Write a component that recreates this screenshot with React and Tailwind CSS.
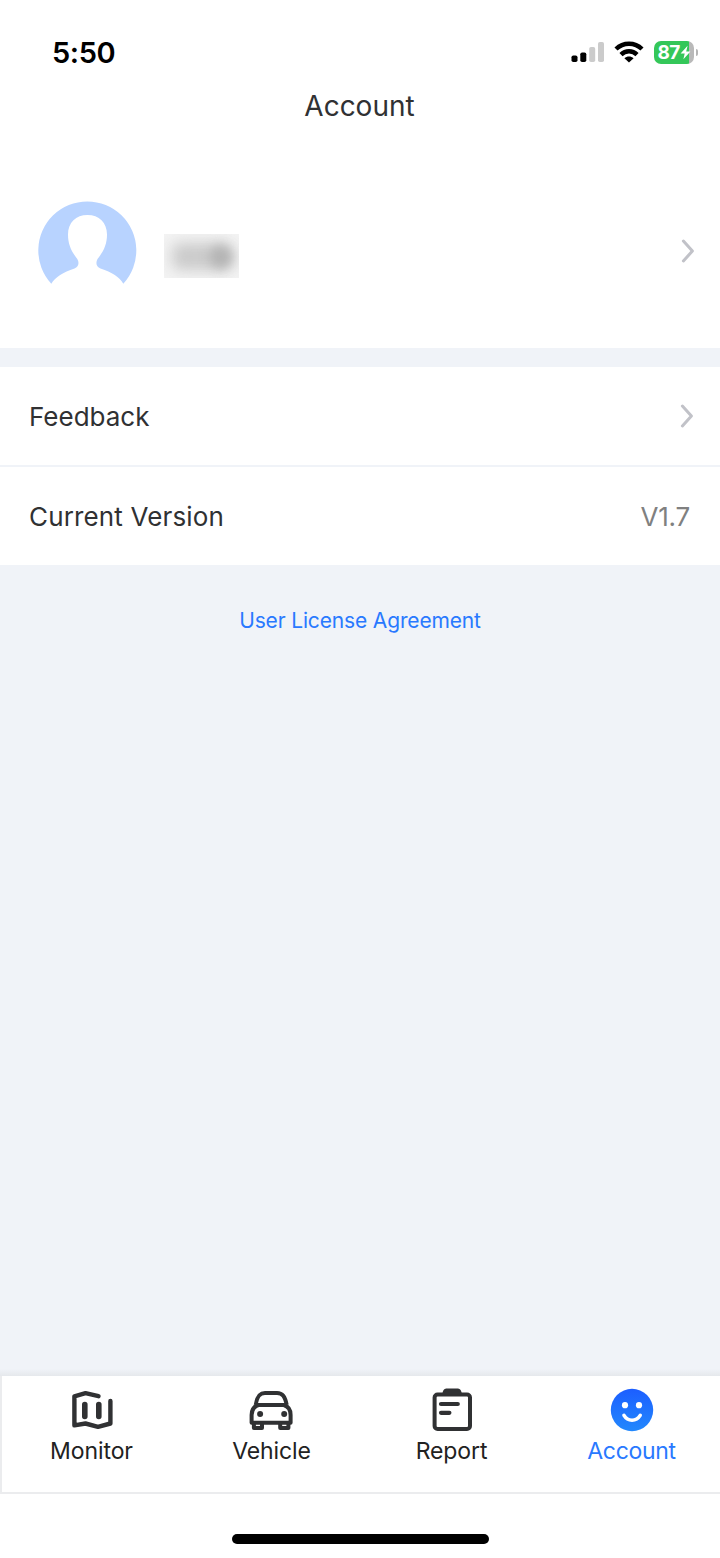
import { clsx } from 'clsx';

function SignalIcon() {
    return (
        <svg width="34" height="22" viewBox="0 0 34 22">
            <rect x="0.5" y="14.5" width="6" height="6.5" rx="1.8" fill="#000" />
            <rect x="9.3" y="11.5" width="6" height="9.5" rx="1.8" fill="#000" />
            <rect x="18.2" y="6" width="6" height="15" rx="1.8" fill="#cbcbcb" />
            <rect x="27" y="1" width="6" height="20" rx="1.8" fill="#cbcbcb" />
        </svg>
    );
}

function WifiIcon() {
    return (
        <svg width="30" height="22" viewBox="0 0 30 22" fill="none" stroke="#000" strokeWidth="4.4">
            <path d="M2 8 A18.6 18.6 0 0 1 28 8" />
            <path d="M7 13.6 A11.3 11.3 0 0 1 23 13.6" />
            <path d="M15 21.6 L10.4 17.3 C13 14.9 17 14.9 19.6 17.3 Z" fill="#000" stroke="none" />
        </svg>
    );
}

function BatteryIcon() {
    return (
        <div className="relative flex h-[23px] w-[45px] items-center">
            <div className="h-[23px] w-[40px] rounded-[7px] bg-[linear-gradient(90deg,#34c759_35px,#b9b9b9_35px)]" />
            <div className="ml-[2px] h-[7px] w-[2px] rounded-r-full bg-[#b5b5b5]" />
            <span className="absolute left-[3.5px] top-0 text-[19px] font-bold leading-[23px] tracking-[-0.6px] text-white">87</span>
            <svg className="absolute left-[26px] top-[4px]" width="11" height="15" viewBox="0 0 11 14">
                <path d="M7.6 0.3 L0.6 8 H4.7 L3.4 13.7 L10.4 5.9 H6.2 Z" fill="#fff" />
            </svg>
        </div>
    );
}

function Chevron({ className }) {
    return (
        <svg className={className} width="14" height="24" viewBox="0 0 14 24" fill="none" stroke="#c1c2c8" strokeWidth="3" strokeLinecap="round" strokeLinejoin="round">
            <path d="M2.4 2 L11.4 12 L2.4 22" />
        </svg>
    );
}

function Avatar() {
    return (
        <svg width="100" height="100" viewBox="0 0 100 100">
            <path
                fill="#b8d3ff"
                fillRule="evenodd"
                d="M13.3 82.7 A49 49 0 1 1 85.3 82.7 C81.5 75.8 74 71.2 62.5 67.4 C58.5 66 57.3 62 59.5 58 C65.5 50.5 69 43.5 69 33.5 C69 21.5 61 14 49.5 14 C38 14 30 21.5 30 33.5 C30 43.5 33.5 50.5 39.3 58 C41.6 62 40.5 66 36.5 67.4 C25 71.2 17.5 75.8 13.3 82.7 Z"
            />
        </svg>
    );
}

// Masked user name
function BlurredName() {
    return (
        <div className="relative ml-[26px] mt-[10px] h-[44px] w-[75px] overflow-hidden bg-[#f3f3f3]">
            <div className="absolute left-[8px] top-[9px] h-[27px] w-[60px] rounded-[8px] bg-[#cbcbcb] blur-[7px]" />
            <div className="absolute left-[46px] top-[12px] h-[22px] w-[22px] rounded-full bg-[#b2b2b2] blur-[6px]" />
        </div>
    );
}

function MonitorIcon() {
    return (
        <svg width="44" height="44" viewBox="0 0 44 44" fill="none" stroke="#303133" strokeWidth="4.4" strokeLinecap="round" strokeLinejoin="round">
            <path d="M28.5 8.2 L15.5 5.2 L4.4 8.3 V37.4 L15.5 35.5 L28 38.8 L40.4 35.5 V13" />
            <path d="M14.8 16.5 V28.5 M28.8 16.5 V28.5" strokeWidth="5.6" />
        </svg>
    );
}

function VehicleIcon() {
    return (
        <svg width="46" height="44" viewBox="1 0 46 44" fill="none" stroke="#303133" strokeWidth="4" strokeLinejoin="round">
            <path d="M7.7 17 C9 8.5 11.5 5 17 5 H29 C34.5 5 37 8.5 38.7 17" />
            <path d="M10.5 17 H35.9 C40.6 18.5 42.6 22 42.6 27 V34.8 H3.6 V27 C3.6 22 5.8 18.5 10.5 17 Z" />
            <path d="M5.9 35 V40 H14 V35 M32.2 35 V40 H40.4 V35" />
            <circle cx="12.1" cy="26" r="3" fill="#303133" stroke="none" />
            <circle cx="36.2" cy="26" r="3" fill="#303133" stroke="none" />
        </svg>
    );
}

function ReportIcon() {
    return (
        <svg width="44" height="44" viewBox="0 0 44 44" fill="none" stroke="#303133" strokeWidth="4" strokeLinecap="round">
            <rect x="4.6" y="6.6" width="35.4" height="34.4" rx="3" />
            <path d="M12.2 6.5 C12.7 2.4 14 0.4 16.2 0.4 H28 C30.2 0.4 31.5 2.4 32 6.5 Z" fill="#303133" stroke="none" />
            <path d="M11 16 H27.8 M11 24.8 H19.4" strokeWidth="4.2" />
        </svg>
    );
}

function AccountIcon() {
    return (
        <svg width="44" height="44" viewBox="0 0 44 44">
            <defs>
                <linearGradient id="face" x1="0" y1="0" x2="0" y2="1">
                    <stop offset="0" stopColor="#1c5eff" />
                    <stop offset="1" stopColor="#2288fd" />
                </linearGradient>
            </defs>
            <circle cx="22" cy="22" r="21.2" fill="url(#face)" />
            <circle cx="15" cy="17.2" r="3.1" fill="#fff" />
            <circle cx="29" cy="17.2" r="3.1" fill="#fff" />
            <path d="M14 27.4 C17.8 33.8 26.2 33.8 30.2 27.4" fill="none" stroke="#fff" strokeWidth="3.6" strokeLinecap="round" />
        </svg>
    );
}

const tabs = [
    { label: 'Monitor', Icon: MonitorIcon },
    { label: 'Vehicle', Icon: VehicleIcon },
    { label: 'Report', Icon: ReportIcon },
    { label: 'Account', Icon: AccountIcon, active: true },
];

export default function App() {
    return (
        <div className="flex h-[1558px] w-[720px] flex-col overflow-hidden bg-white font-['Inter',sans-serif] text-[#303133]">
            {/* Status bar */}
            <div className="flex h-[82px] items-center justify-between pl-[52px] pr-[21px] pt-[22px]">
                <span className="text-[29px] font-semibold leading-none tracking-[-0.4px] text-black">5:50</span>
                <div className="flex items-center">
                    <SignalIcon />
                    <div className="ml-[9px] mr-[10px] flex">
                        <WifiIcon />
                    </div>
                    <BatteryIcon />
                </div>
            </div>

            <h1 className="h-[68px] pr-px pt-[6px] text-center text-[28px] leading-[36px]">Account</h1>

            {/* Profile */}
            <div className="flex h-[198px] items-center pl-[38px] pr-[25px] pt-[4px]">
                <Avatar />
                <BlurredName />
                <Chevron className="ml-auto" />
            </div>

            {/* Settings */}
            <div className="flex flex-1 flex-col bg-[#f0f3f8] pt-[19px]">
                <div className="flex h-[98px] items-center justify-between bg-white pl-[29px] pr-[26px] text-[26px]">
                    <span>Feedback</span>
                    <Chevron />
                </div>
                <div className="mt-[2px] flex h-[98px] items-center justify-between bg-white pl-[29px] pr-[30px] text-[26px]">
                    <span className="tracking-[0.15px]">Current Version</span>
                    <span className="tracking-[-0.2px] text-[#808080]">V1.7</span>
                </div>
                <a className="mt-[40px] text-center text-[21px] leading-[32px] tracking-[-0.15px] text-[#2979ff]">User License Agreement</a>
            </div>

            {/* Tab bar */}
            <div className="h-[7px] bg-linear-to-b from-[#f0f3f8] to-[#e5e8ec]" />
            <nav className="relative flex h-[118px] border-b-2 border-[#ebecee] bg-white">
                <div className="absolute inset-y-0 left-0 w-[2px] bg-[#ebecee]" />
                {tabs.map(({ label, Icon, active }) => (
                    <div key={label} className="flex flex-1 flex-col items-center pl-[3px] pt-[12px]">
                        <Icon />
                        <span className={clsx('mt-[3px] text-[23px] leading-[32px]', active ? 'tracking-[-0.3px] text-[#2979ff]' : 'tracking-[-0.1px] text-[#222]')}>
                            {label}
                        </span>
                    </div>
                ))}
            </nav>
            <div className="flex h-[64px] justify-center pt-[40px]">
                <div className="h-[10px] w-[257px] rounded-full bg-black" />
            </div>
        </div>
    );
}
